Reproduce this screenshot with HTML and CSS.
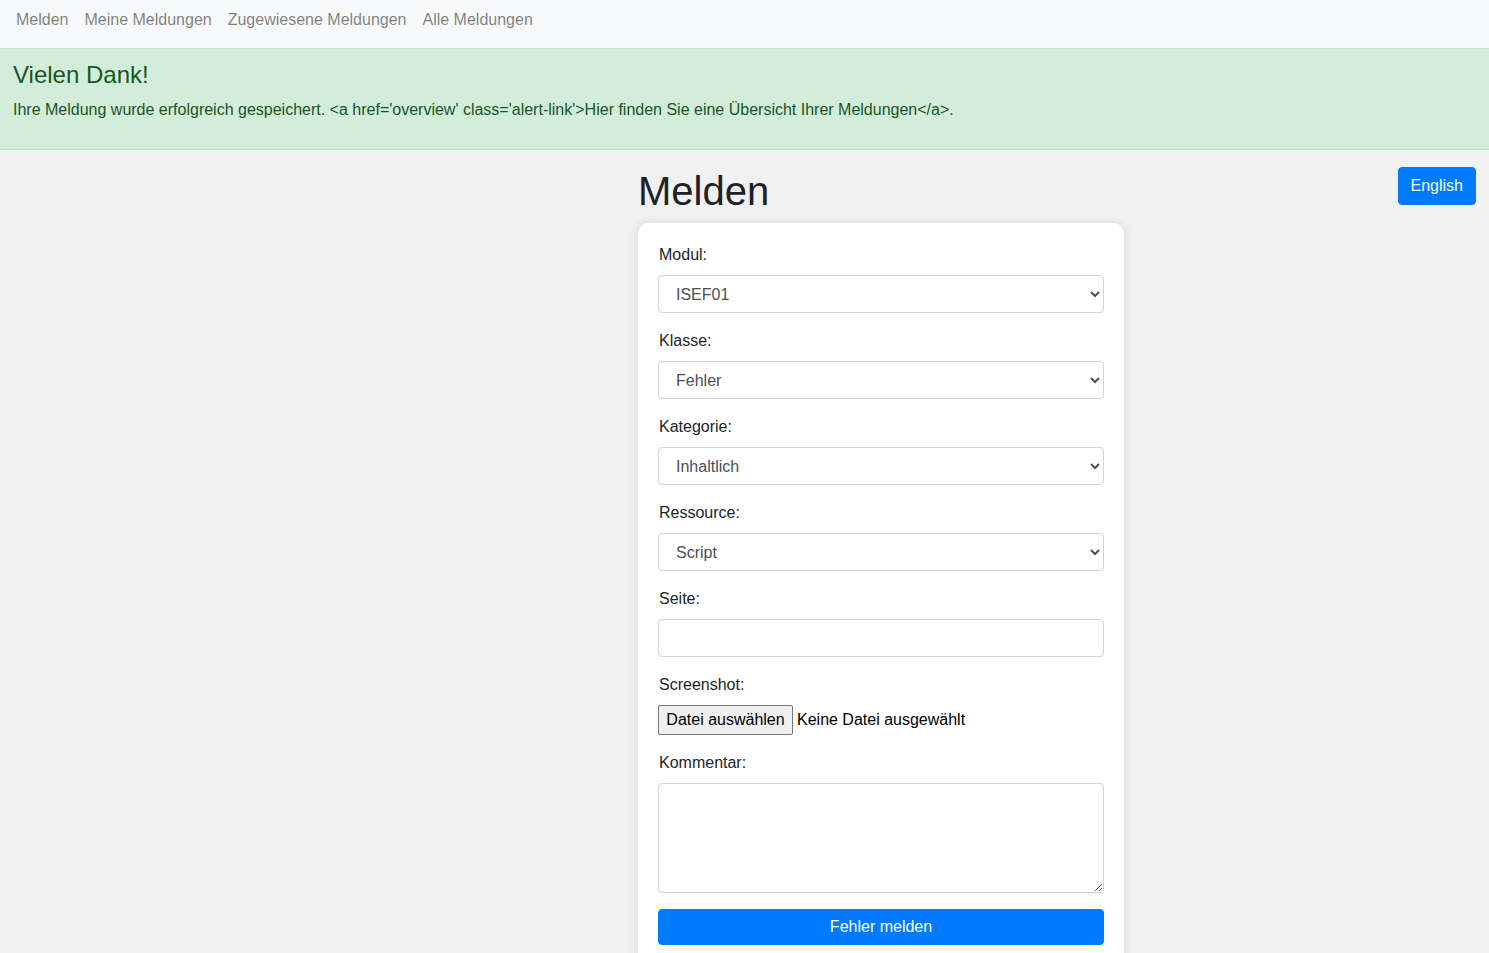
FILE: index.html
```html
<!DOCTYPE html>
<html lang="de">
<head>
<meta charset="utf-8">
<title>Melden</title>
<link rel="stylesheet" href="styles.css">
</head>
<body>
<nav class="navbar">
  <a class="nav-link" href="#">Melden</a>
  <a class="nav-link" href="#">Meine Meldungen</a>
  <a class="nav-link" href="#">Zugewiesene Meldungen</a>
  <a class="nav-link" href="#">Alle Meldungen</a>
</nav>
<div class="alert">
  <h4 class="alert-heading">Vielen Dank!</h4>
  <p class="alert-text">Ihre Meldung wurde erfolgreich gespeichert. &lt;a href='overview' class='alert-link'&gt;Hier finden Sie eine Übersicht Ihrer Meldungen&lt;/a&gt;.</p>
</div>
<main class="main">
  <div class="spacer"></div>
  <section class="content">
    <h1 class="title">Melden</h1>
    <form class="card">
      <div class="form-group">
        <label class="label">Modul:</label>
        <select class="control select"><option>ISEF01</option></select>
      </div>
      <div class="form-group">
        <label class="label">Klasse:</label>
        <select class="control select"><option>Fehler</option></select>
      </div>
      <div class="form-group">
        <label class="label">Kategorie:</label>
        <select class="control select"><option>Inhaltlich</option></select>
      </div>
      <div class="form-group">
        <label class="label">Ressource:</label>
        <select class="control select"><option>Script</option></select>
      </div>
      <div class="form-group">
        <label class="label">Seite:</label>
        <input class="control" type="text">
      </div>
      <div class="form-group">
        <label class="label">Screenshot:</label>
        <div class="file">
          <button type="button" class="file-btn">Datei auswählen</button>
          <span class="file-name">Keine Datei ausgewählt</span>
        </div>
      </div>
      <div class="form-group">
        <label class="label">Kommentar:</label>
        <textarea class="control textarea"></textarea>
      </div>
      <button type="button" class="btn btn-block">Fehler melden</button>
    </form>
  </section>
  <div class="aside">
    <button type="button" class="btn">English</button>
  </div>
</main>
</body>
</html>
```
FILE: styles.css
```css
html, body {
  margin: 0;
  padding: 0;
}
body {
  font-family: "Liberation Sans", Arial, sans-serif;
  font-size: 16px;
  line-height: 24px;
  color: #212529;
  background: #f1f1f1;
  min-height: 953px;
  overflow: hidden;
}
.navbar {
  display: flex;
  background: #f8f9fa;
  padding: 8px;
  height: 32px;
}
.nav-link {
  display: block;
  padding: 0 8px;
  line-height: 24px;
  color: rgba(0, 0, 0, 0.5);
  text-decoration: none;
}
.alert {
  background: #d4edda;
  color: #155724;
  border: 1px solid #c3e6cb;
  border-left: 0;
  border-right: 0;
  padding: 11px 12px 11px 13px;
}
.alert-heading {
  margin: 0 0 9px;
  font-size: 24px;
  line-height: 29px;
  font-weight: 400;
}
.alert-text {
  margin: 0 0 16px;
}
.main {
  display: grid;
  grid-template-columns: 625px 486px 1fr;
  padding: 17px 13px 0;
}
.title {
  margin: 0 0 8px;
  font-size: 40px;
  line-height: 48px;
  font-weight: 400;
  color: #1e2125;
}
.card {
  background: #fff;
  border-radius: 10px;
  box-shadow: 0 0 10px rgba(0, 0, 0, 0.12);
  padding: 20px;
}
.form-group {
  margin-bottom: 16px;
}
.label {
  display: block;
  margin-bottom: 8px;
  padding-left: 1px;
}
.control {
  display: block;
  box-sizing: border-box;
  width: 100%;
  height: 38px;
  border: 1px solid #ced4da;
  border-radius: 4px;
  background-color: #fff;
  color: #495057;
  font-family: inherit;
  font-size: 16px;
  padding: 6px 12px;
}
.select {
  padding-left: 13px;
}
.textarea {
  height: 110px;
  resize: vertical;
}
.file {
  display: flex;
  align-items: center;
  gap: 4px;
  height: 30px;
}
.file-btn {
  box-sizing: border-box;
  height: 30px;
  width: 135px;
  font-family: inherit;
  font-size: 16px;
  color: #000;
  background: #efefef;
  border: 1px solid #767676;
  border-radius: 2px;
  padding: 0 6px;
}
.file-name {
  color: #000;
}
.btn {
  box-sizing: border-box;
  background: #007bff;
  color: #fff;
  border: 1px solid #007bff;
  border-radius: 4px;
  font-family: inherit;
  font-size: 16px;
  line-height: 24px;
  padding: 6px 12px;
  height: 38px;
}
.btn-block {
  display: block;
  width: 100%;
  height: 36px;
  padding: 5px 12px;
}
.aside {
  display: flex;
  justify-content: flex-end;
  align-items: flex-start;
}
```
